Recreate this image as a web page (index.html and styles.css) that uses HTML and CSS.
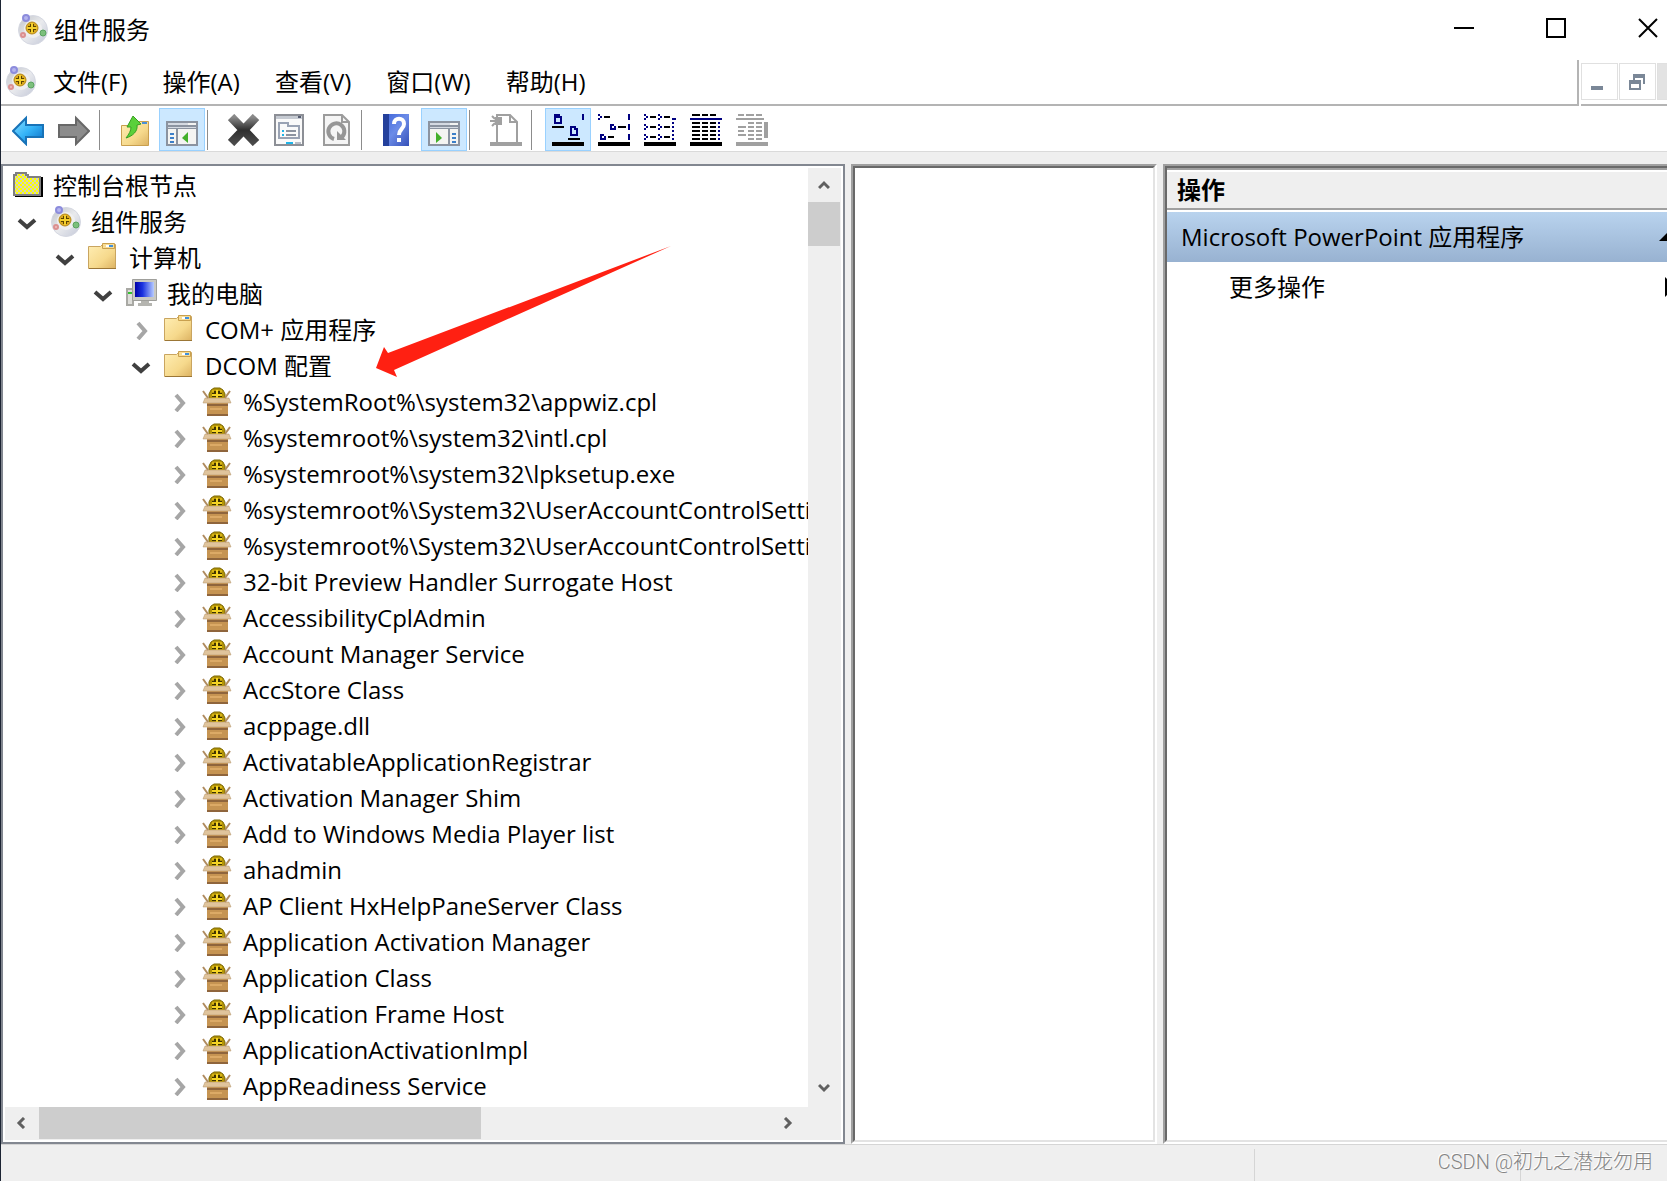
FILE: index.html
```html
<!DOCTYPE html>
<html lang="zh-CN">
<head>
<meta charset="utf-8">
<title>组件服务</title>
<link rel="stylesheet" href="styles.css">
</head>
<body>
<svg class="sprite" aria-hidden="true">
  <defs>
    <linearGradient id="g-disc" x1="0" y1="0" x2="1" y2="1"><stop offset="0" stop-color="#bfc2c8"/><stop offset=".5" stop-color="#e9eaed"/><stop offset="1" stop-color="#c3c8d8"/></linearGradient>
    <linearGradient id="g-folder" x1="0" y1="0" x2="1" y2="1"><stop offset="0" stop-color="#ffeeb4"/><stop offset=".6" stop-color="#f6d98c"/><stop offset="1" stop-color="#dcb262"/></linearGradient>
    <linearGradient id="g-blue" x1="0" y1="0" x2="1" y2="1"><stop offset="0" stop-color="#8fe0ff"/><stop offset=".5" stop-color="#35b4f8"/><stop offset="1" stop-color="#0a6cc4"/></linearGradient>
    <linearGradient id="g-x" x1="0" y1="0" x2="0" y2="1"><stop offset="0" stop-color="#8a8a8a"/><stop offset=".5" stop-color="#2e2e2e"/><stop offset="1" stop-color="#4a4a4a"/></linearGradient>
    <linearGradient id="g-help" x1="0" y1="0" x2="1" y2="1"><stop offset="0" stop-color="#3c63d8"/><stop offset=".5" stop-color="#6c8ce8"/><stop offset="1" stop-color="#3550b8"/></linearGradient>
    <linearGradient id="g-screen"><stop offset="0" stop-color="#0000a8"/><stop offset=".4" stop-color="#1c34e0"/><stop offset="1" stop-color="#b8ccff"/></linearGradient>
    <pattern id="p-check" width="4" height="4" patternUnits="userSpaceOnUse"><path fill="#ffff00" d="M0 0h4v4H0z"/><path fill="#d0d0c8" d="M0 0h2v2H0zM2 2h2v2H2z"/></pattern>
  </defs>
  <symbol id="disc" viewBox="0 0 32 32">
    <circle cx="16" cy="16" r="14.500" fill="url(#g-disc)" stroke="#d5d8e2"/>
    <circle cx="16" cy="15" r="9" fill="#efefef"/>
    <circle cx="15" cy="14" r="6" fill="#d9a820" stroke="#b98c1c"/>
    <path fill="#5a4200" d="M11 12h2v-2h4v2h2v4h-2v2h-4v-2h-2z"/>
    <path fill="#f4cf2c" d="M14 9h2v4h4v2h-4v4h-2v-4h-4v-2h4z"/>
    <circle cx="9" cy="4" r="3" fill="#b4b4ee" stroke="#8c8cdc" stroke-width="2"/>
    <circle cx="6" cy="21" r="2" fill="#eec0c0" stroke="#dc9090" stroke-width="2"/>
    <circle cx="26" cy="19" r="3" fill="#7cc07c" stroke="#5aa35f"/>
  </symbol>
  <symbol id="root" viewBox="0 0 32 32">
    <path fill="#000" d="M3 27h28V7h-2v18H3z"/>
    <path fill="url(#p-check)" stroke="#808080" stroke-width="2" d="M2 25V5h2V3h10v2h2v2h12v18z"/>
  </symbol>
  <symbol id="folder" viewBox="0 0 32 32">
    <path fill="url(#g-folder)" stroke="#c9a560" d="M.5 4.500h12l2-2h13v24H.5z"/>
    <path fill="#f7dc94" stroke="#c9a04e" d="M14.500 6.500v-5h12v5z"/>
    <path fill="#fff" d="M18 3h3v2h-3z"/><path fill="#3f8fdc" d="M21 3h4v2h-4z"/>
    <path stroke="#9b7636" d="M1 26.500h27"/>
  </symbol>
  <symbol id="computer" viewBox="0 0 32 32">
    <path fill="#a9a9a4" d="M0 10h8v18H0z"/><path fill="#dededa" d="M2 12h4v14H2z"/><path fill="#35c22f" d="M2 14h4v2H2z"/>
    <path fill="#c9c9c3" stroke="#9f9f9b" d="M6.500 1.500h24v21h-24z"/>
    <path fill="url(#g-screen)" d="M9 4h19v15H9z"/>
    <path fill="#b5b5b0" d="M15 23h8v2h3v3H12v-3h3z"/>
  </symbol>
  <symbol id="box" viewBox="0 0 32 32">
    <path fill="#b39408" stroke="#7d6800" d="M7 13V8l2-4 3-2h6l3 2 2 4v5z"/>
    <path fill="#3f3300" d="M10 7h2V5h6v2h2v4H10z"/>
    <path fill="#f5d423" d="M14 4h2v4h4v2h-4v3h-2v-3h-4V8h4z"/>
    <path fill="#d8b414" d="M10 4h2v2h-2zM18 4h2v2h-2z"/>
    <path fill="#c69452" d="M5 16h21v14H5z"/>
    <path fill="#8f653c" d="M5 18h21v2H5zM5 28h21v2H5z"/><path fill="#dcaa66" d="M8 22h12v2H8z"/>
    <path fill="#e0c49c" stroke="#b3936b" stroke-width=".5" d="M3 12h24l2 5H1z"/>
    <path stroke="#b08c60" stroke-width="2" d="M1 5l5 7M28 5l-5 7"/>
  </symbol>
  <symbol id="open" viewBox="0 0 20 20"><path fill="none" stroke="#404040" stroke-width="4" d="M2 8l8 7 8-7"/></symbol>
  <symbol id="shut" viewBox="0 0 20 20"><path fill="none" stroke="#a6a6a6" stroke-width="4" d="M7 3l7 8-7 8"/></symbol>
</svg>

<div class="window">
  <header class="titlebar">
    <svg class="icon"><use href="#disc"/></svg>
    <h1 class="title">组件服务</h1>
    <div class="caption">
      <button class="cap" aria-label="最小化"><svg viewBox="0 0 20 20"><path stroke="#000" stroke-width="2" d="M0 10h20"/></svg></button>
      <button class="cap" aria-label="最大化"><svg viewBox="0 0 20 20"><path fill="none" stroke="#000" stroke-width="2" d="M1 1h18v18H1z"/></svg></button>
      <button class="cap" aria-label="关闭"><svg viewBox="0 0 20 20"><path stroke="#000" stroke-width="2" d="M1 1l18 18M19 1L1 19"/></svg></button>
    </div>
  </header>

  <div class="menurow">
    <nav class="menubar">
      <svg class="icon"><use href="#disc"/></svg>
      <button class="menu">文件(F)</button>
      <button class="menu">操作(A)</button>
      <button class="menu">查看(V)</button>
      <button class="menu">窗口(W)</button>
      <button class="menu">帮助(H)</button>
    </nav>
    <div class="mdi">
      <button class="mdi-btn" aria-label="最小化子窗口"><svg viewBox="0 0 16 16"><path fill="#7a8797" d="M0 12h12v4H0z"/></svg></button>
      <button class="mdi-btn" aria-label="还原子窗口"><svg viewBox="0 0 16 16"><path fill="#7a8797" d="M4 0h12v10h-2V4H6v2H4zM0 6h12v10H0zM2 10v4h8v-4z" fill-rule="evenodd"/></svg></button>
      <button class="mdi-btn mdi-off" aria-label="关闭子窗口" disabled></button>
    </div>
  </div>

  <div class="toolbar" role="toolbar">
    <button class="tool" aria-label="后退"><svg viewBox="0 0 32 32"><path fill="url(#g-blue)" stroke="#1873b8" stroke-width="2" d="M1 17L14 4v7h17v12H14v7z"/></svg></button>
    <button class="tool" aria-label="前进"><svg viewBox="0 0 32 32"><path fill="#8c8c8c" stroke="#686868" stroke-width="2" d="M31 17L18 4v7H1v12h17v7z"/></svg></button>
    <span class="sep"></span>
    <button class="tool" aria-label="上一级"><svg viewBox="0 0 32 32"><path fill="url(#g-folder)" stroke="#c99f4e" d="M1.500 11.500h9l2-4h16v24h-27z"/><path fill="#4a90d8" d="M22 8h5v2h-5z"/><path fill="#5bd03a" stroke="#37a022" d="M13 2l8 8-4 1c1 6-4 11-11 13 3-4 5-7 5-11H7z"/></svg></button>
    <button class="tool on" aria-label="显示/隐藏控制台树"><svg viewBox="0 0 32 32"><path fill="#f4f4f2" stroke="#8b93a0" stroke-width="2" d="M1 8h30v23H1z"/><path fill="#8b93a0" d="M2 11h28v4H2zM10 15h2v15h-2z"/><path fill="#d5dae2" d="M2 9h20v2H2zM2 13h28v1H2z"/><path fill="#3c7fc8" d="M4 19h4v2H4zM4 23h4v2H4zM4 27h4v2H4z"/><path fill="#43b02a" d="M22 18v11l-6-5z"/></svg></button>
    <span class="sep"></span>
    <button class="tool" aria-label="删除"><svg viewBox="0 0 32 32"><path stroke="url(#g-x)" stroke-width="9" d="M3 3l25 26M28 3L3 29"/></svg></button>
    <button class="tool" aria-label="属性"><svg viewBox="0 0 32 32"><path fill="#fafafa" stroke="#8c8f96" stroke-width="2" d="M1 1h28v30H1z"/><path fill="#c5cad2" d="M2 2h26v3H2z"/><path fill="#555c70" d="M24 2h3v2h-3z"/><path fill="none" stroke="#9aa3b4" stroke-width="2" d="M5 9h9v3h11v12H5z"/><path fill="#1fb4e8" d="M8 16h2v2H8zM8 20h2v2H8zM12 28h7v2h-7z"/><path fill="#8c93a0" d="M12 16h10v2H12zM12 20h10v2H12z"/><path fill="#b9bdc6" d="M21 28h6v2h-6z"/></svg></button>
    <button class="tool" aria-label="刷新"><svg viewBox="0 0 32 32"><path fill="#f5f5f5" stroke="#9c9c9c" stroke-width="2" d="M4 1h18l7 7v23H4z"/><path fill="none" stroke="#9c9c9c" stroke-width="2" d="M22 1v7h7"/><path fill="none" stroke="#969696" stroke-width="4" d="M14 25a8 8 0 1 1 8-2"/><path fill="#969696" d="M17 17v9h9z"/></svg></button>
    <span class="sep"></span>
    <button class="tool" aria-label="帮助"><svg viewBox="0 0 32 32"><path fill="url(#g-help)" d="M1 0h26v32H1z"/><path fill="#24409c" d="M1 0h6v32H1z"/><path fill="none" stroke="#fff" stroke-width="4" d="M12 10c0-7 10-7 10 0 0 5-5 5-5 11M17 24v4"/></svg></button>
    <button class="tool on" aria-label="显示/隐藏操作窗格"><svg viewBox="0 0 32 32"><path fill="#f4f4f2" stroke="#8b93a0" stroke-width="2" d="M1 8h30v23H1z"/><path fill="#8b93a0" d="M2 11h28v4H2zM20 15h2v15h-2z"/><path fill="#d5dae2" d="M2 9h20v2H2zM2 13h28v1H2z"/><path fill="#3c7fc8" d="M24 19h4v2h-4zM24 23h4v2h-4zM24 27h4v2h-4z"/><path fill="#43b02a" d="M8 18v11l6-5z"/></svg></button>
    <span class="sep"></span>
    <button class="tool" aria-label="新建" disabled><svg viewBox="0 0 32 32"><path fill="none" stroke="#a0a0a0" stroke-width="2" d="M7 28V1h13l7 7v20M20 1v7h7M0 7h5M2 2l3 3M2 12l3-3"/><path fill="#a0a0a0" d="M5 3h7v8H5zM0 28h32v4H0z"/></svg></button>
    <span class="sep"></span>
    <button class="tool on" aria-label="大图标"><svg viewBox="0 0 32 32" shape-rendering="crispEdges"><path fill="#000080" fill-rule="evenodd" d="M2 0h6v2h2v8H2zM4 4v4h4V4zM30 0h2v6h-2zM18 12h6v2h2v8h-8zM20 14v6h4v-4h-2v-2z"/><path d="M0 12h12v2H0zM16 24h12v2H16zM0 28h32v4H0z"/></svg></button>
    <button class="tool" aria-label="小图标"><svg viewBox="0 0 32 32" shape-rendering="crispEdges"><path fill="#000080" fill-rule="evenodd" d="M0 0h2v2h2v2H2v2H0V4h2V2H0zM30 0h2v6h-2zM12 10h4v2h2v4h-6zM14 12v2h2v-2zM30 10h2v6h-2zM2 20h4v2h2v4H2zM4 22v2h2v-2zM30 20h2v6h-2z"/><path d="M6 2h6v2H6zM20 12h8v2h-8zM10 22h6v2h-6zM0 28h32v4H0z"/></svg></button>
    <button class="tool" aria-label="列表"><svg viewBox="0 0 32 32" shape-rendering="crispEdges"><path fill="#000080" d="M0 0h2v2h2v2H2v2H0V4h2V2H0zM14 0h2v2h2v2h-2v2h-2V4h2V2h-2zM0 10h2v2h2v2H2v2H0v-2h2v-2H0zM14 10h2v2h2v2h-2v2h-2v-2h2v-2h-2zM0 20h2v2h2v2H2v2H0v-2h2v-2H0zM14 20h2v2h2v2h-2v2h-2v-2h2v-2h-2zM28 4h4v2h-4zM28 8h2v2h-2zM28 12h2v2h-2zM28 16h2v2h-2zM28 20h2v2h-2zM28 24h2v2h-2z"/><path d="M6 2h6v2H6zM20 2h6v2h-6zM6 12h6v2H6zM20 12h6v2h-6zM6 22h6v2H6zM20 22h6v2h-6zM0 28h32v4H0z"/></svg></button>
    <button class="tool" aria-label="详细信息"><svg viewBox="0 0 32 32" shape-rendering="crispEdges"><path stroke="#000" stroke-width="2" d="M2 1h8m2 0h6m2 0h6M2 9h8m2 0h6m2 0h6M2 13h8m2 0h6m2 0h6M2 17h8m2 0h6m2 0h6M2 21h8m2 0h6m2 0h6M2 25h8m2 0h6m2 0h6"/><path fill="#000080" d="M0 4h32v2H0zM28 8h2v2h-2zM28 12h2v2h-2zM28 16h2v2h-2zM28 20h2v2h-2zM28 24h2v2h-2z"/><path d="M0 28h32v4H0z"/></svg></button>
    <button class="tool" aria-label="状态" disabled><svg viewBox="0 0 32 32" shape-rendering="crispEdges"><path stroke="#a0a0a0" stroke-width="2" d="M2 1h6m2 0h8m2 0h6M0 5h28M12 9h6m2 0h6M2 13h8m2 0h6m2 0h6M2 17h6m4 0h6m2 0h6M2 21h8m2 0h6m2 0h6M12 25h6m2 0h6"/><path fill="#a0a0a0" d="M28 8h4v16h-4zM0 28h32v4H0z"/></svg></button>
  </div>

  <main class="panes">
    <section class="tree-pane">
      <div class="tree-view">
        <ul class="tree">
          <li><div class="row root"><svg class="icon"><use href="#root"/></svg><span>控制台根节点</span></div>
            <ul class="branch first">
              <li><div class="row"><button class="toggle" aria-label="折叠"><svg><use href="#open"/></svg></button><svg class="icon"><use href="#disc"/></svg><span>组件服务</span></div>
                <ul class="branch">
                  <li><div class="row"><button class="toggle" aria-label="折叠"><svg><use href="#open"/></svg></button><svg class="icon"><use href="#folder"/></svg><span>计算机</span></div>
                    <ul class="branch">
                      <li><div class="row"><button class="toggle" aria-label="折叠"><svg><use href="#open"/></svg></button><svg class="icon"><use href="#computer"/></svg><span>我的电脑</span></div>
                        <ul class="branch">
                          <li><div class="row"><button class="toggle" aria-label="展开"><svg><use href="#shut"/></svg></button><svg class="icon"><use href="#folder"/></svg><span>COM+ 应用程序</span></div></li>
                          <li><div class="row"><button class="toggle" aria-label="折叠"><svg><use href="#open"/></svg></button><svg class="icon"><use href="#folder"/></svg><span>DCOM 配置</span></div>
                            <ul class="branch">
                              <li><div class="row"><button class="toggle" aria-label="展开"><svg><use href="#shut"/></svg></button><svg class="icon"><use href="#box"/></svg><span>%SystemRoot%\system32\appwiz.cpl</span></div></li>
                              <li><div class="row"><button class="toggle" aria-label="展开"><svg><use href="#shut"/></svg></button><svg class="icon"><use href="#box"/></svg><span>%systemroot%\system32\intl.cpl</span></div></li>
                              <li><div class="row"><button class="toggle" aria-label="展开"><svg><use href="#shut"/></svg></button><svg class="icon"><use href="#box"/></svg><span>%systemroot%\system32\lpksetup.exe</span></div></li>
                              <li><div class="row"><button class="toggle" aria-label="展开"><svg><use href="#shut"/></svg></button><svg class="icon"><use href="#box"/></svg><span>%systemroot%\System32\UserAccountControlSettings.dll</span></div></li>
                              <li><div class="row"><button class="toggle" aria-label="展开"><svg><use href="#shut"/></svg></button><svg class="icon"><use href="#box"/></svg><span>%systemroot%\System32\UserAccountControlSettings.dll</span></div></li>
                              <li><div class="row"><button class="toggle" aria-label="展开"><svg><use href="#shut"/></svg></button><svg class="icon"><use href="#box"/></svg><span>32-bit Preview Handler Surrogate Host</span></div></li>
                              <li><div class="row"><button class="toggle" aria-label="展开"><svg><use href="#shut"/></svg></button><svg class="icon"><use href="#box"/></svg><span>AccessibilityCplAdmin</span></div></li>
                              <li><div class="row"><button class="toggle" aria-label="展开"><svg><use href="#shut"/></svg></button><svg class="icon"><use href="#box"/></svg><span>Account Manager Service</span></div></li>
                              <li><div class="row"><button class="toggle" aria-label="展开"><svg><use href="#shut"/></svg></button><svg class="icon"><use href="#box"/></svg><span>AccStore Class</span></div></li>
                              <li><div class="row"><button class="toggle" aria-label="展开"><svg><use href="#shut"/></svg></button><svg class="icon"><use href="#box"/></svg><span>acppage.dll</span></div></li>
                              <li><div class="row"><button class="toggle" aria-label="展开"><svg><use href="#shut"/></svg></button><svg class="icon"><use href="#box"/></svg><span>ActivatableApplicationRegistrar</span></div></li>
                              <li><div class="row"><button class="toggle" aria-label="展开"><svg><use href="#shut"/></svg></button><svg class="icon"><use href="#box"/></svg><span>Activation Manager Shim</span></div></li>
                              <li><div class="row"><button class="toggle" aria-label="展开"><svg><use href="#shut"/></svg></button><svg class="icon"><use href="#box"/></svg><span>Add to Windows Media Player list</span></div></li>
                              <li><div class="row"><button class="toggle" aria-label="展开"><svg><use href="#shut"/></svg></button><svg class="icon"><use href="#box"/></svg><span>ahadmin</span></div></li>
                              <li><div class="row"><button class="toggle" aria-label="展开"><svg><use href="#shut"/></svg></button><svg class="icon"><use href="#box"/></svg><span>AP Client HxHelpPaneServer Class</span></div></li>
                              <li><div class="row"><button class="toggle" aria-label="展开"><svg><use href="#shut"/></svg></button><svg class="icon"><use href="#box"/></svg><span>Application Activation Manager</span></div></li>
                              <li><div class="row"><button class="toggle" aria-label="展开"><svg><use href="#shut"/></svg></button><svg class="icon"><use href="#box"/></svg><span>Application Class</span></div></li>
                              <li><div class="row"><button class="toggle" aria-label="展开"><svg><use href="#shut"/></svg></button><svg class="icon"><use href="#box"/></svg><span>Application Frame Host</span></div></li>
                              <li><div class="row"><button class="toggle" aria-label="展开"><svg><use href="#shut"/></svg></button><svg class="icon"><use href="#box"/></svg><span>ApplicationActivationImpl</span></div></li>
                              <li><div class="row"><button class="toggle" aria-label="展开"><svg><use href="#shut"/></svg></button><svg class="icon"><use href="#box"/></svg><span>AppReadiness Service</span></div></li>
                            </ul>
                          </li>
                        </ul>
                      </li>
                    </ul>
                  </li>
                </ul>
              </li>
            </ul>
          </li>
        </ul>
      </div>
      <div class="vscroll">
        <button class="scroll-btn" aria-label="向上滚动"><svg viewBox="0 0 12 12"><path fill="none" stroke="#606060" stroke-width="3" d="M1 9l5-5 5 5"/></svg></button>
        <div class="vthumb"></div>
        <button class="scroll-btn end" aria-label="向下滚动"><svg viewBox="0 0 12 12"><path fill="none" stroke="#606060" stroke-width="3" d="M1 2l5 5 5-5"/></svg></button>
      </div>
      <div class="hscroll">
        <button class="scroll-btn" aria-label="向左滚动"><svg viewBox="0 0 12 12"><path fill="none" stroke="#606060" stroke-width="3" d="M9 1L4 6l5 5"/></svg></button>
        <div class="hthumb"></div>
        <button class="scroll-btn end" aria-label="向右滚动"><svg viewBox="0 0 12 12"><path fill="none" stroke="#606060" stroke-width="3" d="M4 1l5 5-5 5"/></svg></button>
      </div>
      <svg class="pointer" viewBox="0 0 296 132" aria-hidden="true"><path fill="#ff2012" d="M0 122l8-21 4 6L295 0 18 124l3 7z"/></svg>
    </section>

    <section class="sunken result-pane"><div class="sunken-in"></div></section>

    <aside class="sunken action-pane">
      <div class="sunken-in">
        <h2 class="action-head">操作</h2>
        <button class="action-group"><span>Microsoft PowerPoint 应用程序</span><svg viewBox="0 0 16 8"><path d="M0 8l8-8 8 8z"/></svg></button>
        <button class="action-item"><span>更多操作</span><svg viewBox="0 0 10 20"><path d="M0 0l10 10L0 20z"/></svg></button>
      </div>
    </aside>
  </main>

  <footer class="statusbar">
    <span class="cell"></span>
    <span class="cell mid"></span>
    <span class="cell last"></span>
    <span class="watermark">CSDN @初九之潜龙勿用</span>
  </footer>
</div>
</body>
</html>
```
FILE: styles.css
```css
* { box-sizing: border-box; }

body {
  margin: 0;
  background: #efefef;
  color: #000;
  font: 24px/36px "Open Sans", "Noto Sans CJK SC", sans-serif;
  overflow: hidden;
}

button {
  padding: 0;
  border: 0;
  background: none;
  color: inherit;
  font: inherit;
}

svg { display: block; flex: none; }
ul { margin: 0; padding: 0; list-style: none; }
.sprite { position: absolute; width: 0; height: 0; }
.icon { width: 32px; height: 32px; }

.window {
  display: flex;
  flex-direction: column;
  min-height: 100vh;
  border-left: 1px solid #1c2433;
}

/* Title bar */
.titlebar {
  display: flex;
  align-items: center;
  height: 60px;
  padding-left: 16px;
  background: #fff;
}
.title { margin: 0 0 0 5px; font-size: 24px; font-weight: 400; }
.caption { display: flex; margin-left: auto; margin-right: -27px; padding-bottom: 4px; }
.cap { display: grid; place-items: center; width: 92px; height: 56px; }
.cap svg { width: 20px; height: 20px; }

/* Menu */
.menurow { display: flex; gap: 2px; height: 46px; background: #fff; }
.menubar {
  display: flex;
  flex: 1;
  align-items: center;
  padding-left: 4px;
  border-right: 2px solid #b4b4b4;
  border-bottom: 2px solid #b4b4b4;
}
.menu { margin-right: 35px; white-space: nowrap; }
.menubar .icon { margin-right: 16px; }
.mdi {
  display: flex;
  gap: 1px;
  width: 86px;
  padding-top: 3px;
  overflow: hidden;
  border-bottom: 2px solid #b4b4b4;
}
.mdi-btn {
  display: grid;
  flex: none;
  place-items: center;
  width: 37px;
  height: 37px;
  padding-right: 2px;
  border: 1px solid #e0e0e0;
}
.mdi-btn svg { width: 16px; height: 16px; }
.mdi-off { background: #e3e3e3; }

/* Toolbar */
.toolbar {
  display: flex;
  height: 46px;
  padding: 2px 4px 1px;
  border-bottom: 1px solid #dadada;
  background: #fff;
}
.tool {
  display: grid;
  flex: none;
  place-items: center;
  width: 46px;
  height: 43px;
  padding-right: 1px;
  border: 1px solid transparent;
}
.tool svg { width: 32px; height: 32px; }
.tool.on { padding-right: 0; border-color: #99d1ff; background: #cce8ff; }
.sep { flex: none; width: 1px; height: 40px; margin: 2px 13px 0 2px; background: #8c8c8c; }

/* Panes */
.panes {
  display: grid;
  flex: 1;
  grid-template-columns: 844px 306px 1fr;
  gap: 6px;
  padding-top: 12px;
}
.tree-pane {
  position: relative;
  display: grid;
  grid-template: 1fr 33px / 1fr 33px;
  padding: 2px;
  border: 2px solid #828790;
  background: #fff;
}
.tree-view { min-width: 0; overflow: hidden; }
.row { display: flex; align-items: center; height: 36px; white-space: nowrap; }
.row .icon { margin-right: 9px; }
.root { padding-left: 7px; }
.branch { padding-left: 38px; }
.branch.first { padding-left: 12px; }
.toggle { flex: none; width: 20px; margin-right: 13px; }
.toggle svg { width: 20px; height: 20px; }

.vscroll, .hscroll { display: flex; background: #efefef; }
.vscroll { flex-direction: column; }
.hscroll { grid-column: 1 / -1; padding-right: 36px; }
.scroll-btn { display: grid; place-items: center; width: 34px; height: 34px; padding: 0 2px 2px 0; }
.vscroll .scroll-btn:first-child { padding-bottom: 0; }
.scroll-btn svg { width: 12px; height: 12px; }
.scroll-btn.end { margin-top: auto; }
.hscroll .end { margin: 0 0 0 auto; }
.vthumb { width: 32px; height: 44px; background: #cdcdcd; }
.hthumb { width: 442px; height: 32px; background: #cdcdcd; }
.pointer { position: absolute; left: 373px; top: 80px; width: 296px; height: 132px; }

.sunken {
  display: flex;
  border: 2px solid;
  border-color: #a0a0a0 #fff #fff #a0a0a0;
  background: #fff;
}
.sunken-in {
  flex: 1;
  min-width: 0;
  border: 2px solid;
  border-color: #696969 #e3e3e3 #e3e3e3 #696969;
}
.action-pane, .action-pane .sunken-in { border-right: 0; }

.action-head {
  height: 42px;
  margin: 0 0 2px;
  padding-left: 10px;
  border-top: 2px solid #a0a0a0;
  border-bottom: 2px solid #a0a0a0;
  background: #efefef;
  box-shadow: inset 0 2px #fff;
  font-size: 24px;
  font-weight: 700;
  line-height: 40px;
}
.action-group, .action-item {
  display: flex;
  align-items: center;
  justify-content: space-between;
  width: 100%;
  height: 50px;
  overflow: hidden;
  text-align: left;
}
.action-group { padding-left: 14px; background: linear-gradient(#b9d3ee, #98b2d1); }
.action-group svg { width: 16px; height: 8px; margin-right: -8px; }
.action-item { padding-left: 62px; }
.action-item svg { width: 10px; height: 20px; margin-right: -8px; }

/* Status bar */
.statusbar {
  position: relative;
  display: flex;
  height: 37px;
  padding-top: 4px;
  border-top: 1px solid #d5d5d5;
}
.cell { flex: 1; border-right: 1px solid #d5d5d5; }
.cell.mid { flex: 0 0 266px; }
.cell.last { flex: 0 0 146px; border: 0; }
.watermark {
  position: absolute;
  right: 14px;
  top: 0;
  color: #858585;
  font: 300 20px/34px Roboto, "Noto Sans CJK SC", sans-serif;
  text-shadow: -1px -1px #fff;
}
```
